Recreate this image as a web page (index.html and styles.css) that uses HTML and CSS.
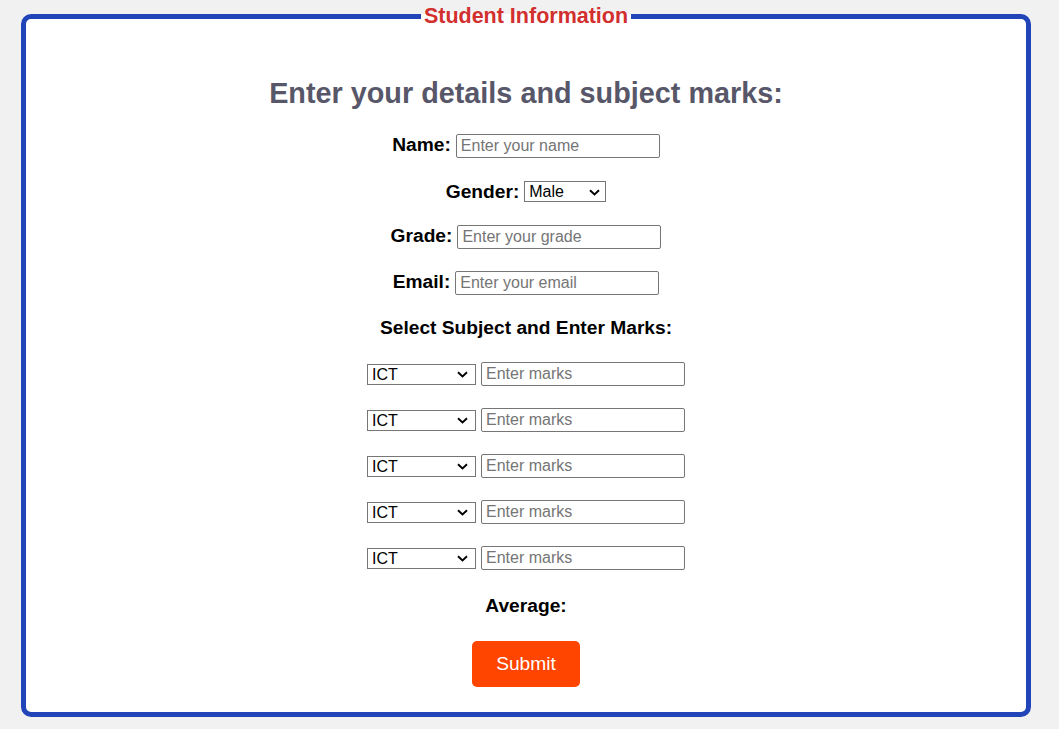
FILE: index.html
```html
<!DOCTYPE html>
<html lang="en">
<head>
<meta charset="utf-8">
<title>Student Information</title>
<link rel="stylesheet" href="styles.css">
</head>
<body>
<fieldset class="card">
  <legend class="card-title">Student Information</legend>
  <form class="form">
    <h2 class="heading">Enter your details and subject marks:</h2>
    <div class="row row-name">
      <label class="label" for="name">Name:</label>
      <input class="field" id="name" type="text" placeholder="Enter your name">
    </div>
    <div class="row row-gender">
      <label class="label" for="gender">Gender:</label>
      <span class="select-wrap wrap-gender">
        <select class="select select-gender" id="gender">
          <option>Male</option>
          <option>Female</option>
        </select>
        <svg class="chevron" width="11" height="7" viewBox="0 0 11 7" aria-hidden="true"><path d="M1 1.2 L5.5 5.5 L10 1.2" fill="none" stroke="#000" stroke-width="1.9"/></svg>
      </span>
    </div>
    <div class="row row-grade">
      <label class="label" for="grade">Grade:</label>
      <input class="field" id="grade" type="text" placeholder="Enter your grade">
    </div>
    <div class="row row-email">
      <label class="label" for="email">Email:</label>
      <input class="field" id="email" type="email" placeholder="Enter your email">
    </div>
    <p class="label subjects-title">Select Subject and Enter Marks:</p>
    <div class="subjects">
      <div class="row">
        <span class="select-wrap wrap-subject">
          <select class="select select-subject"><option>ICT</option><option>Maths</option><option>Science</option><option>English</option></select>
          <svg class="chevron" width="11" height="7" viewBox="0 0 11 7" aria-hidden="true"><path d="M1 1.2 L5.5 5.5 L10 1.2" fill="none" stroke="#000" stroke-width="1.9"/></svg>
        </span>
        <input class="field" type="number" placeholder="Enter marks">
      </div>
      <div class="row">
        <span class="select-wrap wrap-subject">
          <select class="select select-subject"><option>ICT</option><option>Maths</option><option>Science</option><option>English</option></select>
          <svg class="chevron" width="11" height="7" viewBox="0 0 11 7" aria-hidden="true"><path d="M1 1.2 L5.5 5.5 L10 1.2" fill="none" stroke="#000" stroke-width="1.9"/></svg>
        </span>
        <input class="field" type="number" placeholder="Enter marks">
      </div>
      <div class="row">
        <span class="select-wrap wrap-subject">
          <select class="select select-subject"><option>ICT</option><option>Maths</option><option>Science</option><option>English</option></select>
          <svg class="chevron" width="11" height="7" viewBox="0 0 11 7" aria-hidden="true"><path d="M1 1.2 L5.5 5.5 L10 1.2" fill="none" stroke="#000" stroke-width="1.9"/></svg>
        </span>
        <input class="field" type="number" placeholder="Enter marks">
      </div>
      <div class="row">
        <span class="select-wrap wrap-subject">
          <select class="select select-subject"><option>ICT</option><option>Maths</option><option>Science</option><option>English</option></select>
          <svg class="chevron" width="11" height="7" viewBox="0 0 11 7" aria-hidden="true"><path d="M1 1.2 L5.5 5.5 L10 1.2" fill="none" stroke="#000" stroke-width="1.9"/></svg>
        </span>
        <input class="field" type="number" placeholder="Enter marks">
      </div>
      <div class="row">
        <span class="select-wrap wrap-subject">
          <select class="select select-subject"><option>ICT</option><option>Maths</option><option>Science</option><option>English</option></select>
          <svg class="chevron" width="11" height="7" viewBox="0 0 11 7" aria-hidden="true"><path d="M1 1.2 L5.5 5.5 L10 1.2" fill="none" stroke="#000" stroke-width="1.9"/></svg>
        </span>
        <input class="field" type="number" placeholder="Enter marks">
      </div>
    </div>
    <p class="label average">Average:</p>
    <button class="submit" type="button">Submit</button>
  </form>
</fieldset>
</body>
</html>
```
FILE: styles.css
```css
html, body {
  margin: 0;
  padding: 0;
  background: #f1f1f1;
}

body {
  font-family: "Liberation Sans", Arial, sans-serif;
  color: #000;
}

.card {
  margin: 4px 28px 0 21px;
  padding: 0 0 25px 0;
  border: 5px solid #2144b9;
  border-radius: 10px;
  background: #fff;
  min-width: 0;
}

.card-title {
  margin: 0 auto;
  padding: 0 3px;
  font-size: 21.5px;
  line-height: 25px;
  font-weight: bold;
  color: #d22f2f;
}

.form {
  display: flex;
  flex-direction: column;
  align-items: center;
  padding-top: 48px;
}

.heading {
  margin: 0;
  font-size: 28.8px;
  line-height: 33px;
  font-weight: bold;
  color: #575769;
}

.row {
  display: flex;
  align-items: baseline;
  justify-content: center;
  gap: 5px;
}

.row-name { margin-top: 24px; height: 24px; }
.row-gender { margin-top: 23px; height: 21px; align-items: center; }
.row-grade { margin-top: 23px; height: 24px; }
.row-email { margin-top: 22px; height: 24px; }

.label {
  margin: 0;
  font-size: 19.2px;
  line-height: 22px;
  font-weight: bold;
}

.field {
  box-sizing: border-box;
  width: 204px;
  height: 24px;
  margin: 0;
  padding: 1px 4px;
  border: 1px solid #767676;
  border-radius: 2px;
  font-family: "Liberation Sans", Arial, sans-serif;
  font-size: 16px;
  color: #000;
  background: #fff;
}

.field::placeholder {
  color: #757575;
}

.field::-webkit-outer-spin-button,
.field::-webkit-inner-spin-button {
  -webkit-appearance: none;
  margin: 0;
}

.field[type="number"] {
  -moz-appearance: textfield;
}

.select-wrap {
  position: relative;
  display: inline-flex;
}

.select {
  -webkit-appearance: none;
  appearance: none;
  box-sizing: border-box;
  height: 21px;
  margin: 0;
  padding: 0 4px;
  border: 1px solid #767676;
  border-radius: 0;
  background: #fff;
  font-family: "Liberation Sans", Arial, sans-serif;
  font-size: 16px;
  line-height: 19px;
  color: #000;
}

.select-gender { width: 82px; }
.select-subject { width: 109px; }

.chevron {
  position: absolute;
  top: 50%;
  margin-top: -3px;
  pointer-events: none;
}

.wrap-gender .chevron { right: 6px; }
.wrap-subject .chevron { right: 8px; }

.subjects-title {
  margin-top: 22px;
}

.subjects {
  display: flex;
  flex-direction: column;
  gap: 22px;
  margin-top: 23px;
}

.subjects .row {
  height: 24px;
  align-items: center;
}

.average {
  margin-top: 25px;
}

.submit {
  margin-top: 24px;
  padding: 12px 24px;
  border: none;
  border-radius: 5px;
  background: #ff4500;
  color: #fff;
  font-family: "Liberation Sans", Arial, sans-serif;
  font-size: 19.2px;
  line-height: 22px;
  cursor: pointer;
}
```
